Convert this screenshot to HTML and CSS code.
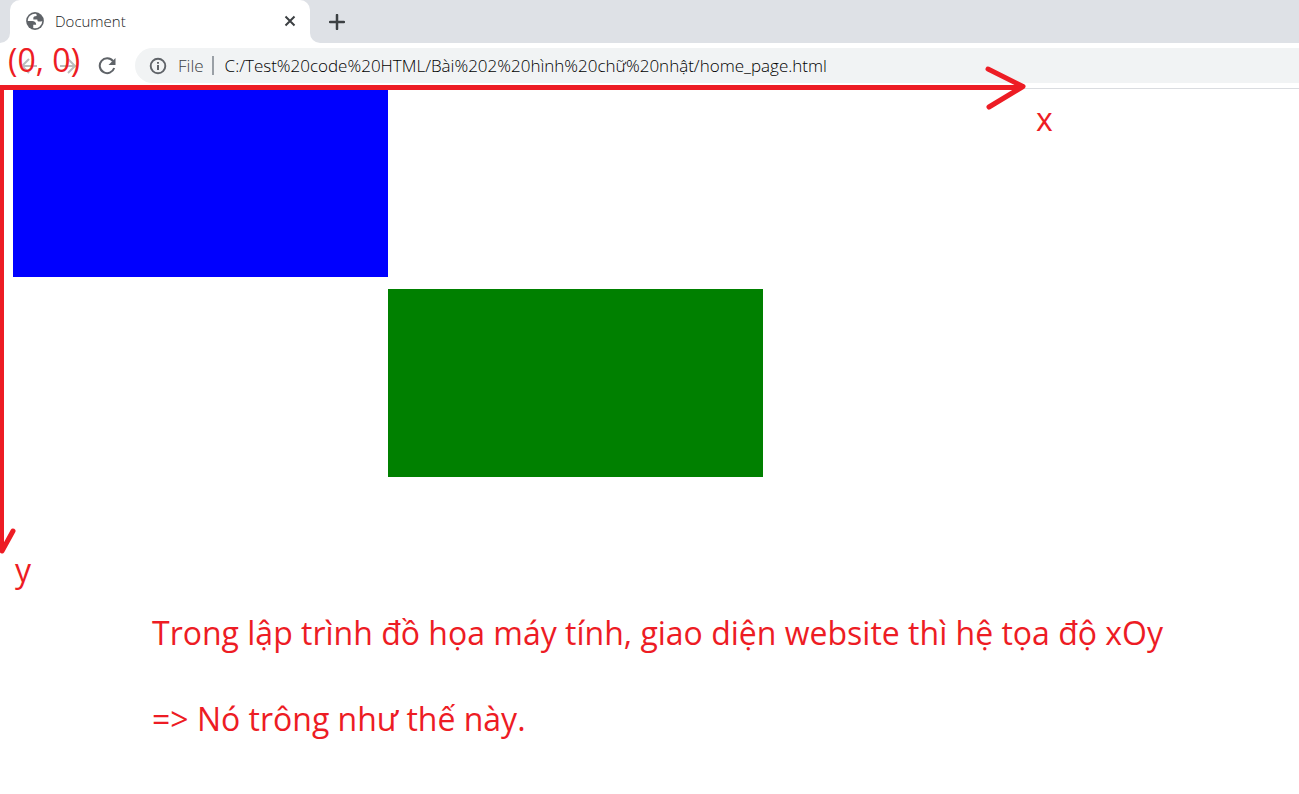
FILE: index.html
```
<!DOCTYPE html>
<html lang="vi">
<head>
<meta charset="utf-8">
<title>Document</title>
<link rel="stylesheet" href="styles.css">
</head>
<body>
<header class="browser">
  <div class="tab-strip">
    <div class="strip-left"></div>
    <div class="tab">
      <svg class="globe" width="20" height="20" viewBox="-1 -1 18 18" aria-hidden="true">
        <circle cx="8" cy="8" r="8" fill="#5f6368"/>
        <path d="M9 1.600C5.100 1.100 1.600 4 1.500 8H5.500C7.700 8 8.900 9.100 9.070 11.400H6.430V14.320A6.560 6.560 0 0 0 14.560 8C14.050 8.350 13.190 8.500 12.060 8.500C10.700 8.500 10.060 7.940 10.060 6.570H6.500V5.570C6.500 4.090 7.470 3.430 9.480 3.430C9.480 2.500 9.400 2 9 1.600Z" fill="#fff"/>
      </svg>
      <span class="tab-title">Document</span>
      <button class="icon-button" type="button" aria-label="Close tab">
        <svg width="12" height="12" viewBox="0 0 12 12"><path d="M1.500 1.500l9 9M10.500 1.500l-9 9" stroke="#3c4043" stroke-width="2"/></svg>
      </button>
    </div>
    <div class="strip-right">
      <button class="icon-button" type="button" aria-label="New tab">
        <svg width="16" height="16" viewBox="0 0 16 16"><path d="M8 1v14M1 8h14" stroke="#3c4043" stroke-width="2.500" stroke-linecap="round"/></svg>
      </button>
    </div>
  </div>
  <div class="toolbar">
    <button class="icon-button" type="button" aria-label="Back">
      <svg width="18" height="18" viewBox="0 0 18 18"><path d="M17 9H3M9 2L2 9l7 7" fill="none" stroke="#babcbe" stroke-width="2"/></svg>
    </button>
    <button class="icon-button" type="button" aria-label="Forward">
      <svg width="18" height="18" viewBox="0 0 18 18"><path d="M1 9h14M9 2l7 7-7 7" fill="none" stroke="#babcbe" stroke-width="2"/></svg>
    </button>
    <button class="icon-button" type="button" aria-label="Reload">
      <svg width="18" height="18" viewBox="0 0 18 18"><path d="M15 4.200A7.400 7.400 0 1 0 16.200 11" fill="none" stroke="#5f6368" stroke-width="2"/><path d="M17.500 1v7h-7z" fill="#5f6368"/></svg>
    </button>
    <div class="address-bar">
      <svg width="18" height="18" viewBox="0 0 18 18" aria-hidden="true"><circle cx="9" cy="9" r="7.300" fill="none" stroke="#5f6368" stroke-width="1.900"/><path d="M9 8v5M9 5v1.800" stroke="#5f6368" stroke-width="2"/></svg>
      <label class="scheme" for="url">File</label>
      <span class="divider"></span>
      <input class="url" id="url" type="text" value="C:/Test%20code%20HTML/Bài%202%20hình%20chữ%20nhật/home_page.html">
    </div>
  </div>
</header>
<main class="page">
  <div class="boxes">
    <div class="box blue"></div>
    <div class="box green"></div>
  </div>
  <div class="caption">
    <p>Trong lập trình đồ họa máy tính, giao diện website thì hệ tọa độ xOy</p>
    <p>=&gt; Nó trông như thế này.</p>
  </div>
</main>
<svg class="axes" width="1040" height="560" viewBox="0 0 1040 560" aria-hidden="true">
  <path d="M0 87.500H1022M1.500 85V550" stroke-width="5"/>
  <path d="M988 69L1023 86.500L989 107M-9 532L2 551L13 531" stroke-width="5" stroke-linecap="round" stroke-linejoin="round"/>
</svg>
<span class="mark origin">(0, 0)</span>
<span class="mark x-name">x</span>
<span class="mark y-name">y</span>
</body>
</html>
```
FILE: styles.css
```
body {
  margin: 0;
  background: #fff;
  font-family: "Open Sans", "Noto Sans", sans-serif;
  position: relative;
}

.tab-strip {
  display: flex;
  height: 43px;
  background: linear-gradient(#dee1e6, #dee1e6) top / 100% 20px no-repeat;
}

.strip-left,
.strip-right {
  background: #dee1e6;
}

.strip-left {
  width: 10px;
  border-bottom-right-radius: 10px;
}

.strip-right {
  flex: 1;
  display: flex;
  align-items: center;
  padding-left: 19px;
  border-bottom-left-radius: 10px;
}

.tab {
  box-sizing: border-box;
  width: 300px;
  display: flex;
  align-items: center;
  gap: 10px;
  padding: 0 14px 2px 15px;
  border-radius: 10px 10px 0 0;
  background: #fff;
}

.tab-title {
  flex: 1;
  font-size: 15px;
  font-weight: 300;
  color: #202124;
}

.icon-button {
  display: flex;
  padding: 0;
  border: 0;
  background: none;
}

.toolbar {
  display: flex;
  align-items: center;
  gap: 21px;
  height: 45px;
  padding-left: 20px;
  border-bottom: 1px solid #dadce0;
}

.address-bar {
  flex: 1;
  display: flex;
  align-items: center;
  height: 35px;
  margin-left: -2px;
  padding-left: 14px;
  border-radius: 18px 0 0 18px;
  background: #f1f3f4;
  font-size: 17px;
  font-weight: 300;
}

.scheme {
  margin-left: 11px;
  color: #3c4043;
}

.divider {
  width: 2px;
  height: 19px;
  margin: 0 11px 0 8px;
  background: #9aa0a6;
}

.url {
  flex: 1;
  min-width: 0;
  padding: 0;
  border: 0;
  outline: 0;
  background: none;
  font: inherit;
  color: #000;
}

.boxes {
  display: grid;
  grid-template-columns: 375px 375px;
  grid-template-rows: 188px 188px;
  row-gap: 12px;
  padding-left: 13px;
}

.blue {
  background: #00f;
}

.green {
  grid-area: 2 / 2;
  background: #008000;
}

.caption {
  padding: 134px 24px 0 152px;
}

.caption p {
  margin: 0 0 42px;
}

.caption p,
.mark {
  font-size: 32px;
  line-height: 44px;
  color: #ed1c24;
}

.axes {
  position: absolute;
  top: 0;
  left: 0;
  fill: none;
  stroke: #ed1c24;
}

.mark {
  position: absolute;
}

.origin {
  top: 38px;
  left: 8px;
}

.x-name {
  top: 97px;
  left: 1036px;
}

.y-name {
  top: 548px;
  left: 15px;
}
```
